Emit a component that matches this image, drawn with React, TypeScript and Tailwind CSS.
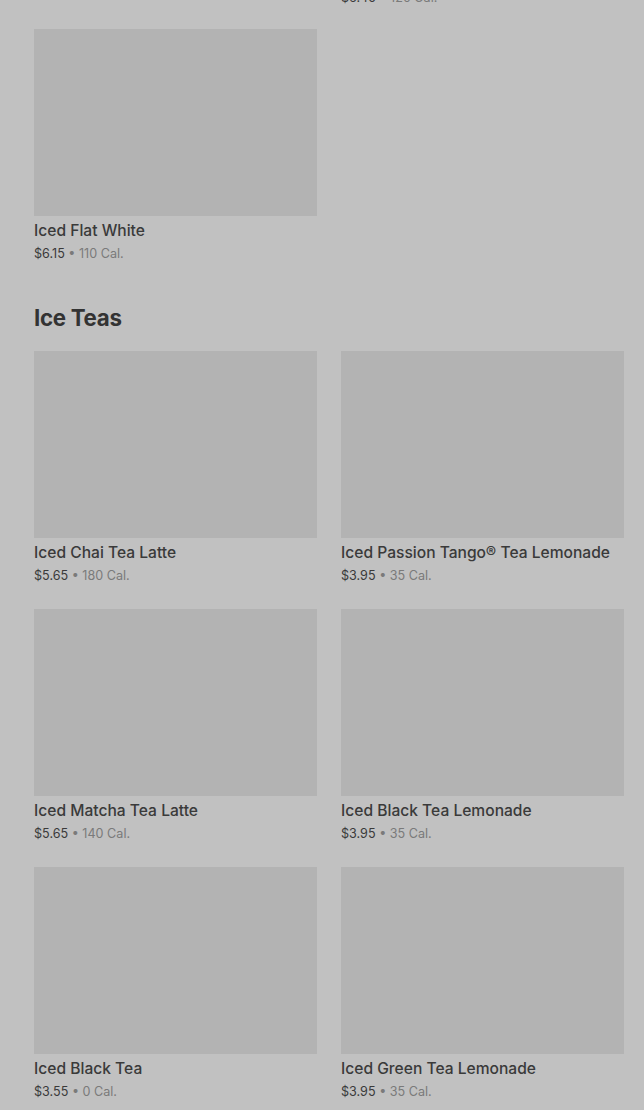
import React from 'react';

interface MenuItem {
  name: string;
  price: string;
  cal: string;
}

const coffees: MenuItem[] = [
  { name: 'Iced Caffè Latte', price: '$5.45', cal: '130 Cal.' },
  { name: 'Iced Brown Sugar Oatmilk Shaken Espresso', price: '$6.45', cal: '120 Cal.' },
  { name: 'Iced Flat White', price: '$6.15', cal: '110 Cal.' },
];

const teas: MenuItem[] = [
  { name: 'Iced Chai Tea Latte', price: '$5.65', cal: '180 Cal.' },
  { name: 'Iced Passion Tango® Tea Lemonade', price: '$3.95', cal: '35 Cal.' },
  { name: 'Iced Matcha Tea Latte', price: '$5.65', cal: '140 Cal.' },
  { name: 'Iced Black Tea Lemonade', price: '$3.95', cal: '35 Cal.' },
  { name: 'Iced Black Tea', price: '$3.55', cal: '0 Cal.' },
  { name: 'Iced Green Tea Lemonade', price: '$3.95', cal: '35 Cal.' },
];

const ItemCard: React.FC<{ item: MenuItem }> = ({ item }) => (
  <div className="flex flex-col">
    <div className="h-[187px] w-full bg-[#b3b3b3]" />
    <div className="mt-[5px] text-[15.6px] leading-5 font-medium text-[#3a3a3a]">{item.name}</div>
    <div className="mt-[3px] text-[12.6px] leading-5 text-[#3a3a3a]">
      {item.price} <span className="text-[#7a7a7a]">• {item.cal}</span>
    </div>
  </div>
);

export default function App() {
  return (
    <div
      className="h-[1110px] w-full overflow-hidden bg-[#c1c1c1] pl-[34px] pr-[20px]"
      style={{ fontFamily: 'Inter, "Noto Sans", sans-serif' }}
    >
      {/* previous category, scrolled mostly out of view */}
      <div className="-mt-[247px] grid grid-cols-2 gap-x-6 gap-y-[21px]">
        {coffees.map((item) => (
          <ItemCard key={item.name} item={item} />
        ))}
      </div>

      <h2 className="mt-[38px] text-[22.3px] leading-8 font-bold tracking-[-0.3px] text-[#333333]">Ice Teas</h2>

      <div className="mt-[17px] grid grid-cols-2 gap-x-6 gap-y-[23px]">
        {teas.map((item) => (
          <ItemCard key={item.name} item={item} />
        ))}
      </div>
    </div>
  );
}
